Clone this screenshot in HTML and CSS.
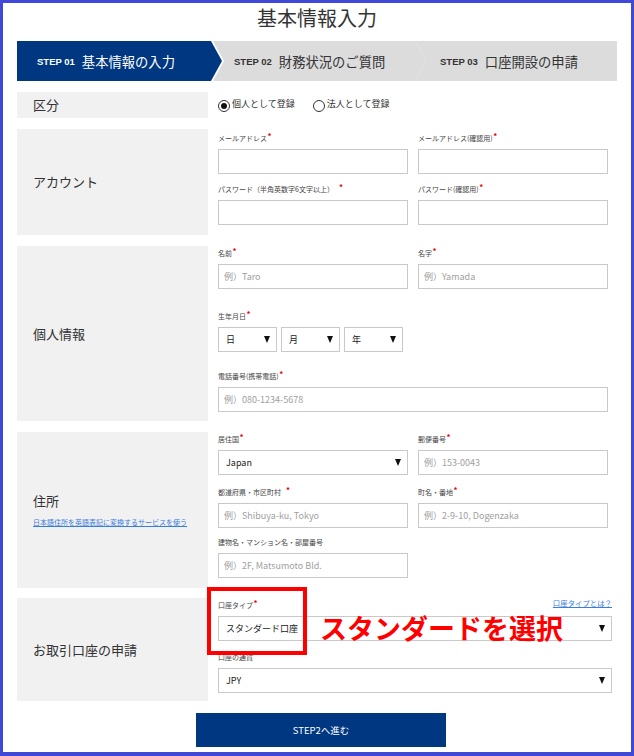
FILE: index.html
```html
<!DOCTYPE html>
<html lang="ja">
<head>
<meta charset="utf-8">
<title>基本情報入力</title>
<link rel="stylesheet" href="styles.css">
</head>
<body>
<div class="frame">
  <h1 class="title">基本情報入力</h1>

  <div class="steps">
    <div class="step step1"><span class="step-no">STEP 01</span><span class="step-name">基本情報の入力</span></div>
    <div class="step step2"><span class="step-no">STEP 02</span><span class="step-name">財務状況のご質問</span></div>
    <div class="step step3"><span class="step-no">STEP 03</span><span class="step-name">口座開設の申請</span></div>
  </div>

  <section class="row row-kubun">
    <div class="row-label">区分</div>
    <div class="row-body kubun-body">
      <label class="radio"><span class="radio-circle checked"></span><span class="radio-text">個人として登録</span></label>
      <label class="radio"><span class="radio-circle"></span><span class="radio-text">法人として登録</span></label>
    </div>
  </section>

  <section class="row">
    <div class="row-label">アカウント</div>
    <div class="row-body body-account">
      <div class="pair">
        <div class="field"><div class="field-label">メールアドレス<span class="req">*</span></div><input class="input" type="text"></div>
        <div class="field"><div class="field-label">メールアドレス(確認用)<span class="req">*</span></div><input class="input" type="text"></div>
      </div>
      <div class="pair gap9">
        <div class="field"><div class="field-label">パスワード（半角英数字6文字以上）<span class="req sp">*</span></div><input class="input" type="password"></div>
        <div class="field"><div class="field-label">パスワード(確認用)<span class="req">*</span></div><input class="input" type="password"></div>
      </div>
    </div>
  </section>

  <section class="row">
    <div class="row-label">個人情報</div>
    <div class="row-body body-personal">
      <div class="pair">
        <div class="field"><div class="field-label">名前<span class="req">*</span></div><input class="input" type="text" placeholder="例）Taro"></div>
        <div class="field"><div class="field-label">名字<span class="req">*</span></div><input class="input" type="text" placeholder="例）Yamada"></div>
      </div>
      <div class="field gap21">
        <div class="field-label">生年月日<span class="req">*</span></div>
        <div class="birth">
          <div class="select small"><span>日</span><span class="caret"></span></div>
          <div class="select small"><span>月</span><span class="caret"></span></div>
          <div class="select small"><span>年</span><span class="caret"></span></div>
        </div>
      </div>
      <div class="field gap18">
        <div class="field-label">電話番号(携帯電話)<span class="req">*</span></div>
        <input class="input" type="text" placeholder="例）080-1234-5678">
      </div>
    </div>
  </section>

  <section class="row">
    <div class="row-label">
      <div>住所</div>
      <a class="convert-link" href="#">日本語住所を英語表記に変換するサービスを使う</a>
    </div>
    <div class="row-body body-address">
      <div class="pair">
        <div class="field"><div class="field-label">居住国<span class="req">*</span></div><div class="select"><span>Japan</span><span class="caret"></span></div></div>
        <div class="field"><div class="field-label">郵便番号<span class="req">*</span></div><input class="input" type="text" placeholder="例）153-0043"></div>
      </div>
      <div class="pair gap11">
        <div class="field"><div class="field-label">都道府県・市区町村<span class="req sp">*</span></div><input class="input" type="text" placeholder="例）Shibuya-ku, Tokyo"></div>
        <div class="field"><div class="field-label">町名・番地<span class="req">*</span></div><input class="input" type="text" placeholder="例）2-9-10, Dogenzaka"></div>
      </div>
      <div class="pair gap8">
        <div class="field"><div class="field-label">建物名・マンション名・部屋番号</div><input class="input" type="text" placeholder="例）2F, Matsumoto Bld."></div>
      </div>
    </div>
  </section>

  <section class="row row-account">
    <div class="row-label">お取引口座の申請</div>
    <div class="row-body body-trade">
      <div class="field">
        <div class="field-label split"><span>口座タイプ<span class="req">*</span></span><a class="type-link" href="#">口座タイプとは？</a></div>
        <div class="select"><span>スタンダード口座</span><span class="caret"></span></div>
      </div>
      <div class="field gap10">
        <div class="field-label">口座の通貨<span class="req">*</span></div>
        <div class="select"><span>JPY</span><span class="caret"></span></div>
      </div>
    </div>
    <div class="mark-box"></div>
    <div class="mark-text">スタンダードを選択</div>
  </section>

  <div class="actions"><button class="next" type="button">STEP2へ進む</button></div>
</div>
</body>
</html>
```
FILE: styles.css
```css
* { box-sizing: border-box; }
html, body { margin: 0; padding: 0; background: #fff; }
body {
  font-family: "Noto Sans CJK JP", "Noto Sans", sans-serif;
  color: #333;
}
.frame {
  width: 634px;
  height: 756px;
  border: 3px solid #4048d8;
  border-bottom-width: 4px;
  padding: 0 14px;
  overflow: hidden;
}
.title {
  margin: 0 0 8px;
  font-size: 20px;
  font-weight: normal;
  line-height: 30px;
  text-align: center;
  color: #333;
}
.steps {
  display: flex;
  height: 40px;
}
.step {
  display: flex;
  align-items: center;
  height: 40px;
  background: #dcdcdc;
  color: #333;
}
.step1 {
  width: 205px;
  flex: none;
  background: #003781;
  color: #fff;
  padding-left: 20px;
  clip-path: polygon(0 0, 194px 0, 205px 50%, 194px 100%, 0 100%);
}
.step2 {
  width: 213px;
  flex: none;
  margin-left: -9px;
  padding-left: 21px;
  clip-path: polygon(0 0, 202px 0, 213px 50%, 202px 100%, 0 100%, 11px 50%);
}
.step3 {
  flex: 1;
  margin-left: -11px;
  padding-left: 25px;
  clip-path: polygon(0 0, 100% 0, 100% 100%, 0 100%, 11px 50%);
}
.step-no {
  font-family: "Liberation Sans", Arial, sans-serif;
  font-weight: bold;
  font-size: 9.5px;
  margin-right: 7px;
}
.step-name {
  font-size: 13.3px;
}

.row {
  display: flex;
  margin-top: 11px;
  position: relative;
}
.row-kubun { margin-top: 11px; }
.row-account { margin-top: 10px; }
.row-label {
  width: 191px;
  flex: none;
  background: #f1f1f1;
  display: flex;
  flex-direction: column;
  justify-content: center;
  padding-left: 16px;
  font-size: 13px;
  color: #333;
  line-height: 18px;
}
.row-body {
  flex: 1;
  padding: 0 9px 0 10px;
}
.kubun-body {
  height: 26px;
  display: flex;
  align-items: center;
  gap: 18px;
}
.radio {
  display: flex;
  align-items: flex-start;
  font-size: 9px;
  color: #333;
  line-height: 12px;
}
.radio-circle {
  width: 12px;
  height: 12px;
  border: 1px solid #333;
  border-radius: 50%;
  margin-top: 2px;
  margin-right: 2px;
  display: flex;
  align-items: center;
  justify-content: center;
  background: #fff;
}
.radio-circle.checked::after {
  content: "";
  width: 6px;
  height: 6px;
  border-radius: 50%;
  background: #111;
}

.body-account { padding-top: 3px; padding-bottom: 10px; }
.body-personal { padding-top: 1px; padding-bottom: 9px; }
.body-address { padding-top: 1px; padding-bottom: 10px; }
.body-trade { padding-top: 1px; padding-bottom: 8px; padding-right: 5px; }

.pair {
  display: grid;
  grid-template-columns: 190px 190px;
  column-gap: 10px;
}
.gap8 { margin-top: 8px; }
.gap9 { margin-top: 9px; }
.gap10 { margin-top: 10px; }
.gap11 { margin-top: 11px; }
.gap18 { margin-top: 18px; }
.gap21 { margin-top: 21px; }

.field-label {
  font-size: 7px;
  line-height: 12px;
  height: 12px;
  margin-bottom: 5px;
  color: #444;
  white-space: nowrap;
}
.field-label.split {
  display: flex;
  justify-content: space-between;
}
.req {
  color: #e60012;
  font-size: 8px;
  font-weight: bold;
  vertical-align: top;
  position: relative;
  top: -2px;
  margin-left: 0.5px;
}
.req.sp { margin-left: 5px; }
.type-link {
  color: #3b7ddd;
  text-decoration: underline;
  font-size: 7.4px;
  position: relative;
  top: -2px;
}
.input {
  display: block;
  width: 100%;
  height: 25px;
  border: 1px solid #c9c9c9;
  background: #fff;
  padding: 0 5px;
  margin: 0;
  font-family: "Noto Sans CJK JP", "Noto Sans", sans-serif;
  font-size: 9px;
  color: #333;
  outline: none;
  border-radius: 0;
}
.input::placeholder { color: #a0a0a0; }
.select {
  display: flex;
  align-items: center;
  justify-content: space-between;
  height: 25px;
  border: 1px solid #c9c9c9;
  background: #fff;
  padding: 0 6px 0 7px;
  font-size: 9px;
  color: #222;
}
.caret {
  width: 0;
  height: 0;
  border-left: 3.5px solid transparent;
  border-right: 3.5px solid transparent;
  border-top: 7px solid #111;
}
.birth {
  display: flex;
  gap: 4px;
}
.select.small { width: 59px; }

.convert-link {
  font-size: 7px;
  line-height: 12px;
  color: #3b7ddd;
  text-decoration: underline;
  margin-top: 6px;
  white-space: nowrap;
}

.mark-box {
  position: absolute;
  left: 190px;
  top: -11px;
  width: 100px;
  height: 68px;
  border: 4px solid #ff0000;
  pointer-events: none;
}
.mark-text {
  position: absolute;
  left: 303px;
  top: 16px;
  font-size: 27px;
  line-height: 27px;
  font-weight: bold;
  color: #ff0000;
  white-space: nowrap;
}

.actions {
  display: flex;
  justify-content: center;
  padding-left: 8px;
  margin-top: 12px;
}
.next {
  width: 250px;
  height: 34px;
  border: none;
  background: #003781;
  color: #fff;
  font-family: "Noto Sans CJK JP", "Noto Sans", sans-serif;
  font-size: 9.5px;
  cursor: pointer;
}
```
